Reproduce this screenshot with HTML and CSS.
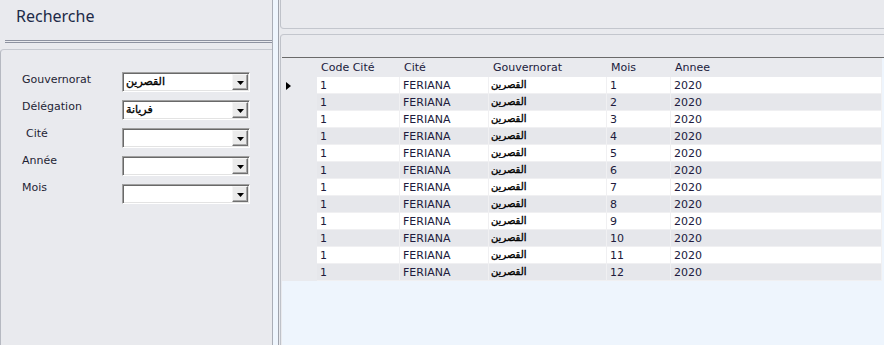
FILE: index.html
```html
<!DOCTYPE html>
<html>
<head>
<meta charset="utf-8">
<link rel="stylesheet" href="styles.css">
</head>
<body>
<div class="app">
  <aside class="left">
    <div class="left-head"><h1 class="title">Recherche</h1></div>
    <div class="left-body">
      <div class="labels">
        <div class="label">Gouvernorat</div>
        <div class="label">Délégation</div>
        <div class="label label-indent">Cité</div>
        <div class="label">Année</div>
        <div class="label">Mois</div>
      </div>
      <div class="combos">
        <div class="combo"><span class="combo-text" dir="rtl">القصرين</span><span class="combo-btn"><svg width="7" height="4" viewBox="0 0 7 4"><polygon points="0,0 7,0 3.5,4" fill="#000"/></svg></span></div>
        <div class="combo"><span class="combo-text" dir="rtl">فريانة</span><span class="combo-btn"><svg width="7" height="4" viewBox="0 0 7 4"><polygon points="0,0 7,0 3.5,4" fill="#000"/></svg></span></div>
        <div class="combo"><span class="combo-text"></span><span class="combo-btn"><svg width="7" height="4" viewBox="0 0 7 4"><polygon points="0,0 7,0 3.5,4" fill="#000"/></svg></span></div>
        <div class="combo"><span class="combo-text"></span><span class="combo-btn"><svg width="7" height="4" viewBox="0 0 7 4"><polygon points="0,0 7,0 3.5,4" fill="#000"/></svg></span></div>
        <div class="combo"><span class="combo-text"></span><span class="combo-btn"><svg width="7" height="4" viewBox="0 0 7 4"><polygon points="0,0 7,0 3.5,4" fill="#000"/></svg></span></div>
      </div>
    </div>
  </aside>
  <div class="splitter"></div>
  <main class="right">
    <div class="top-panel"></div>
    <div class="bottom-panel">
      <div class="grid">
        <div class="row head">
          <div class="rh"></div>
          <div class="hc">Code Cité</div>
          <div class="hc">Cité</div>
          <div class="hc">Gouvernorat</div>
          <div class="hc">Mois</div>
          <div class="hc">Annee</div>
        </div>
        <div class="row"><div class="rh"><span class="cur"></span></div><div class="c">1</div><div class="c">FERIANA</div><div class="c ar">القصرين</div><div class="c">1</div><div class="c">2020</div></div>
        <div class="row alt"><div class="rh"></div><div class="c">1</div><div class="c">FERIANA</div><div class="c ar">القصرين</div><div class="c">2</div><div class="c">2020</div></div>
        <div class="row"><div class="rh"></div><div class="c">1</div><div class="c">FERIANA</div><div class="c ar">القصرين</div><div class="c">3</div><div class="c">2020</div></div>
        <div class="row alt"><div class="rh"></div><div class="c">1</div><div class="c">FERIANA</div><div class="c ar">القصرين</div><div class="c">4</div><div class="c">2020</div></div>
        <div class="row"><div class="rh"></div><div class="c">1</div><div class="c">FERIANA</div><div class="c ar">القصرين</div><div class="c">5</div><div class="c">2020</div></div>
        <div class="row alt"><div class="rh"></div><div class="c">1</div><div class="c">FERIANA</div><div class="c ar">القصرين</div><div class="c">6</div><div class="c">2020</div></div>
        <div class="row"><div class="rh"></div><div class="c">1</div><div class="c">FERIANA</div><div class="c ar">القصرين</div><div class="c">7</div><div class="c">2020</div></div>
        <div class="row alt"><div class="rh"></div><div class="c">1</div><div class="c">FERIANA</div><div class="c ar">القصرين</div><div class="c">8</div><div class="c">2020</div></div>
        <div class="row"><div class="rh"></div><div class="c">1</div><div class="c">FERIANA</div><div class="c ar">القصرين</div><div class="c">9</div><div class="c">2020</div></div>
        <div class="row alt"><div class="rh"></div><div class="c">1</div><div class="c">FERIANA</div><div class="c ar">القصرين</div><div class="c">10</div><div class="c">2020</div></div>
        <div class="row"><div class="rh"></div><div class="c">1</div><div class="c">FERIANA</div><div class="c ar">القصرين</div><div class="c">11</div><div class="c">2020</div></div>
        <div class="row alt"><div class="rh"></div><div class="c">1</div><div class="c">FERIANA</div><div class="c ar">القصرين</div><div class="c">12</div><div class="c">2020</div></div>
      </div>
    </div>
  </main>
</div>
</body>
</html>
```
FILE: styles.css
```css
html, body {
  margin: 0;
  padding: 0;
}
body {
  width: 884px;
  height: 345px;
  overflow: hidden;
  background: #e9eaee;
  font-family: "DejaVu Sans", sans-serif;
  font-size: 11px;
  color: #1e1e34;
}
.app {
  display: flex;
  height: 345px;
}
.left {
  width: 273px;
  box-sizing: border-box;
  border-right: 1px solid #a9adb6;
  background: #e9eaee;
  display: flex;
  flex-direction: column;
}
.left-head {
  margin-left: 5px;
  border-bottom: 3px double #8d92a0;
  padding-left: 11px;
  padding-top: 5px;
  box-sizing: content-box;
  height: 35px;
}
.title {
  margin: 0;
  font-family: "Noto Sans", sans-serif;
  font-weight: normal;
  font-size: 16px;
  line-height: 22px;
  color: #1d2a48;
}
.left-body {
  flex: 1;
  margin-top: 6px;
  border-top: 1px solid #c6c9d0;
  border-left: 1px solid #b6b9c1;
  border-top-left-radius: 4px;
  display: flex;
  padding-left: 21px;
}
.labels {
  width: 100px;
  padding-top: 23px;
  display: flex;
  flex-direction: column;
  gap: 13px;
}
.label {
  line-height: 14px;
  height: 14px;
  white-space: nowrap;
}
.label-indent {
  padding-left: 4px;
}
.combos {
  padding-top: 22px;
  display: flex;
  flex-direction: column;
  gap: 8px;
}
.combo {
  width: 128px;
  height: 20px;
  box-sizing: border-box;
  border: 1px solid;
  border-color: #a0a0a0 #ffffff #ffffff #a0a0a0;
  box-shadow: inset 1px 1px 0 #696969, inset -1px -1px 0 #e3e3e3;
  background: #ffffff;
  display: flex;
  align-items: stretch;
  padding: 1px;
}
.combo-text {
  flex: 1;
  direction: rtl;
  text-align: left;
  padding-left: 2px;
  font-size: 11px;
  font-weight: normal;
  line-height: 16px;
  color: #000;
  unicode-bidi: plaintext;
  -webkit-text-stroke: 0.35px #000;
}
.combo-btn {
  width: 16px;
  height: 16px;
  box-sizing: border-box;
  background: #ebebeb;
  border: 1px solid;
  border-color: #f6f6f6 #6f6f6f #6f6f6f #f6f6f6;
  box-shadow: inset -1px -1px 0 #a8a8a8;
  display: flex;
  align-items: center;
  justify-content: center;
  padding-top: 2px;
}
.combo-btn svg {
  display: block;
}
.splitter {
  width: 5px;
  background: #eef5fd;
}
.right {
  flex: 1;
  border-left: 1px solid #9ea2ab;
  padding-left: 1px;
  background: #e9eaee;
  display: flex;
  flex-direction: column;
}
.top-panel {
  height: 28px;
  border-left: 1px solid #bfc2c9;
  border-bottom: 1px solid #c3c6cd;
  border-bottom-left-radius: 4px;
}
.bottom-panel {
  flex: 1;
  margin-top: 5px;
  border-top: 1px solid #c3c6cd;
  border-left: 1px solid #bfc2c9;
  border-top-left-radius: 4px;
  padding-top: 22px;
  padding-left: 1px;
  display: flex;
  flex-direction: column;
}
.grid {
  flex: 1;
  border-top: 1px solid #6a6a6a;
  background: #eef5fd;
  color: #201a3c;
}
.row {
  display: grid;
  grid-template-columns: 35px 83px 89px 118px 64px 211px;
  width: 600px;
  height: 17px;
  background: #ffffff;
}
.row.alt {
  background: #e6e7eb;
}
.row.head {
  height: 19px;
  background: #e9eaee;
}
.rh {
  background: #e9eaee;
  display: flex;
  align-items: center;
  padding-left: 4px;
}
.cur {
  width: 0;
  height: 0;
  border-left: 5px solid #000;
  border-top: 4px solid transparent;
  border-bottom: 4px solid transparent;
}
.hc {
  line-height: 19px;
  padding-left: 4px;
  white-space: nowrap;
}
.c {
  box-sizing: border-box;
  border-right: 1px solid #f0f0f2;
  border-bottom: 1px solid #f0f0f2;
  line-height: 16px;
  padding-left: 3px;
  padding-top: 1px;
  white-space: nowrap;
  overflow: hidden;
}
.c.ar {
  direction: ltr;
  font-size: 10px;
  color: #000;
  padding-left: 2px;
  padding-top: 0;
  -webkit-text-stroke: 0.35px #000;
}
```
